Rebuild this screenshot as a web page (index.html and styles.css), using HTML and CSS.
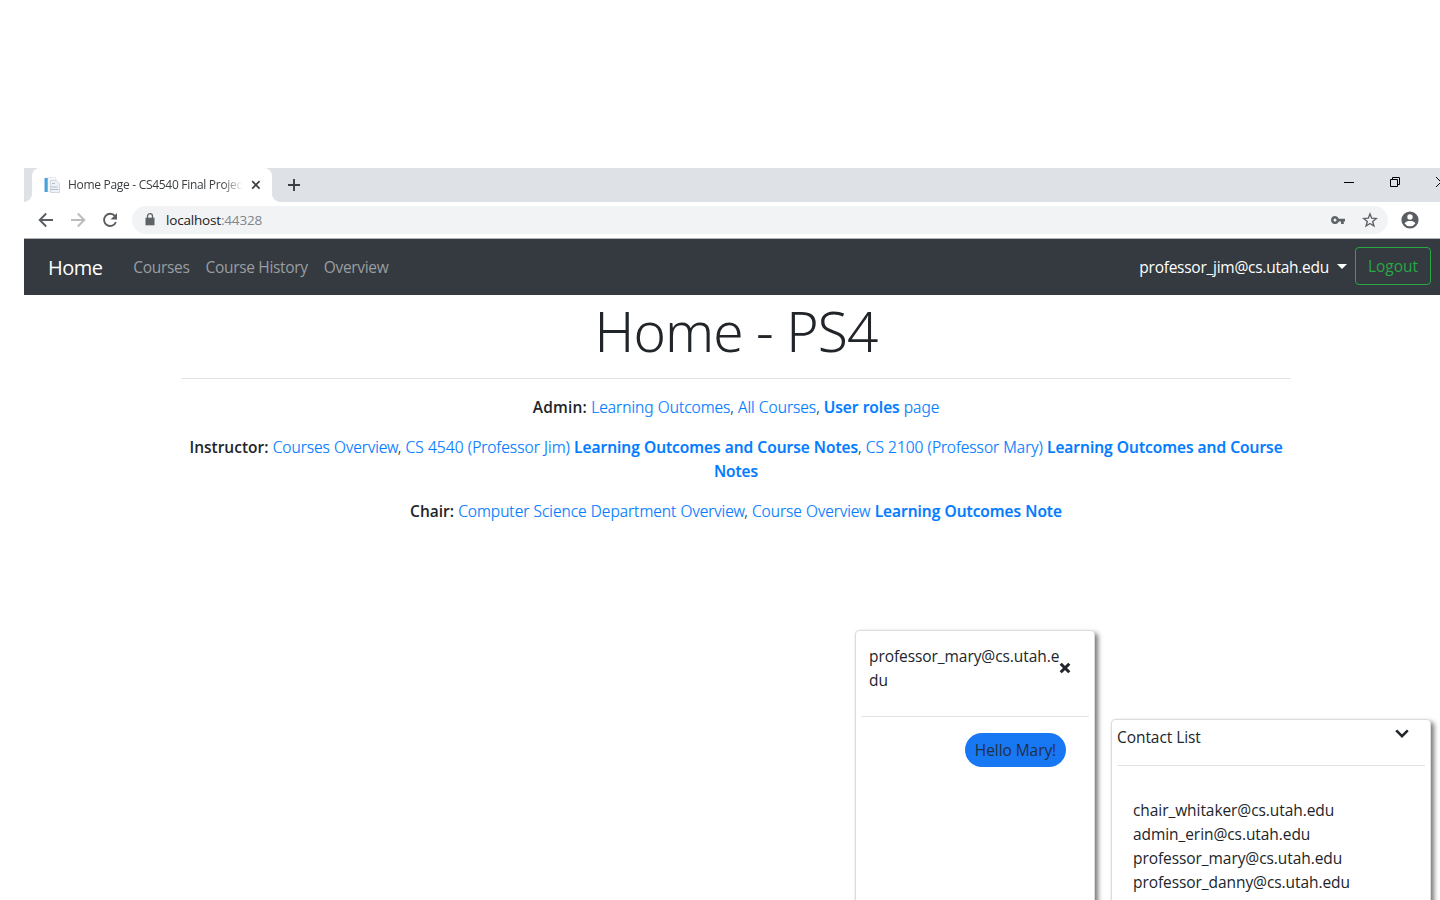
FILE: index.html
```
<!DOCTYPE html>
<html lang="en">
<head>
<meta charset="utf-8">
<title>Home Page - CS4540 Final Project</title>
<link rel="stylesheet" href="styles.css">
</head>
<body>
<div class="window">
  <div class="tabstrip">
    <div class="tab-edge"></div>
    <div class="tab">
      <svg class="favicon" width="16" height="16" viewBox="0 0 16 16"><path d="M3 .5h9v14H3z" fill="#f4f7fa" stroke="#dde3ea" stroke-width=".6"/><path d="M.5 1h3.200v14H.5z" fill="#4da0d8"/><path d="M6.500 3.500h6l3 3v9h-9z" fill="#eff2f5" stroke="#c9d0d9" stroke-width=".8"/><path d="M8 6.500h3M6.500 10h7M6.500 12.500h8" stroke="#b3becb" stroke-width="1"/></svg>
      <span class="tab-title">Home Page - CS4540 Final Projec</span>
      <svg class="tab-close" width="10" height="10" viewBox="0 0 10 10"><path d="M1.2 1.2l7.4 7.4M8.600 1.200L1.200 8.600" stroke="#3c4043" stroke-width="1.700"/></svg>
    </div>
    <div class="tab-rest">
      <svg class="new-tab" width="12" height="12" viewBox="0 0 12 12"><path d="M6 0v12M0 6h12" stroke="#3c4043" stroke-width="1.900"/></svg>
      <div class="controls">
        <svg width="10" height="10" viewBox="0 0 10 10"><path d="M0 5.500h10" stroke="#000"/></svg>
        <svg width="10" height="10" viewBox="0 0 10 10"><path d="M.5 2.500h7v7h-7zM2.500 2.500v-2h7v7h-2" fill="none" stroke="#000"/></svg>
        <svg width="10" height="10" viewBox="0 0 10 10"><path d="M0 0l10 10M10 0L0 10" stroke="#000"/></svg>
      </div>
    </div>
  </div>
  <div class="toolbar">
    <svg class="tool" width="16" height="16" viewBox="0 0 16 16"><path d="M15 8H2M8.200 1.500L1.700 8l6.500 6.500" fill="none" stroke="#5a5e63" stroke-width="1.900"/></svg>
    <svg class="tool" width="16" height="16" viewBox="0 0 16 16"><path d="M1 8h13M7.800 1.500L14.300 8l-6.500 6.500" fill="none" stroke="#babcbe" stroke-width="1.900"/></svg>
    <svg class="tool" width="16" height="16" viewBox="0 0 16 16"><path d="M13 4.200A6.100 6.100 0 1 0 13.900 10" fill="none" stroke="#5a5e63" stroke-width="1.900"/><path d="M15 1v6.500H8.500z" fill="#5a5e63"/></svg>
    <div class="omnibox">
      <svg class="lock" width="10" height="13" viewBox="0 0 10 13"><path d="M.5 4.700h9v7.600h-9z" fill="#5f6368"/><path d="M2.500 5V3.200a2.500 2.500 0 0 1 5 0V5" fill="none" stroke="#5f6368" stroke-width="1.300"/></svg>
      <span class="url">localhost<span class="port">:44328</span></span>
      <svg class="key" width="14" height="8" viewBox="0 0 14 8"><path fill="#5f6368" fill-rule="evenodd" d="M4 0a4 4 0 0 1 3.800 2.700H14v2.800h-1.200V8H10V5.400H7.800A4 4 0 1 1 4 0zM4 2.500a1.500 1.500 0 1 0 0 3 1.500 1.500 0 0 0 0-3z"/></svg>
      <svg class="star" width="16" height="16" viewBox="0 0 16 16"><path d="M8 1.900l1.700 4.300 4.600.3-3.600 3 1.200 4.500L8 11.500 4.100 14l1.200-4.500-3.600-3 4.600-.3z" fill="none" stroke="#5f6368" stroke-width="1.400"/></svg>
    </div>
    <svg class="avatar" width="18" height="18" viewBox="0 0 18 18"><circle cx="9" cy="9" r="8.600" fill="#5a5e63"/><circle cx="9" cy="6" r="2.700" fill="#fff"/><path d="M3.600 12.400c1-2 3-2.500 5.400-2.500s4.400.5 5.400 2.500A6.500 6.500 0 0 1 9 15.200a6.500 6.500 0 0 1-5.400-2.800z" fill="#fff"/></svg>
  </div>
  <nav class="navbar">
    <a class="brand">Home</a>
    <a class="nav-link">Courses</a>
    <a class="nav-link">Course History</a>
    <a class="nav-link">Overview</a>
    <a class="user">professor_jim@cs.utah.edu</a>
    <span class="caret"></span>
    <a class="logout">Logout</a>
  </nav>
  <main class="container">
    <h1>Home - PS4</h1>
    <hr>
    <p><b class="admin">Admin:</b> <a>Learning Outcomes</a>, <a>All Courses</a>, <a><b>User roles</b> page</a></p>
    <p><b>Instructor:</b> <a>Courses Overview</a>, <a><span class="cs">CS 4540 (Professor Jim)</span> <b>Learning Outcomes and Course Notes</b></a>, <a>CS 2100 (Professor Mary) <b>Learning Outcomes and Course<br>Notes</b></a></p>
    <p><b>Chair:</b> <a>Computer Science Department Overview</a>, <a>Course Overview <b>Learning Outcomes Note</b></a></p>
  </main>
</div>
<section class="panel chat">
  <header class="chat-head">
    <span class="chat-name">professor_mary@cs.utah.edu</span>
    <svg class="chat-close" width="12" height="12" viewBox="0 0 12 12"><path d="M1.700 1.700l8.600 8.600M10.300 1.700l-8.600 8.600" stroke="#212529" stroke-width="3"/></svg>
  </header>
  <hr>
  <div class="bubble">Hello Mary!</div>
</section>
<section class="panel contacts">
  <header class="contacts-head">
    <span>Contact List</span>
    <svg width="14" height="9" viewBox="0 0 14 9"><path d="M1.200 1.400L7 7.200l5.800-5.800" fill="none" stroke="#212529" stroke-width="2.500"/></svg>
  </header>
  <hr>
  <ul>
    <li>chair_whitaker@cs.utah.edu</li>
    <li>admin_erin@cs.utah.edu</li>
    <li>professor_mary@cs.utah.edu</li>
    <li>professor_danny@cs.utah.edu</li>
  </ul>
</section>
</body>
</html>
```
FILE: styles.css
```
* { box-sizing: border-box; }
html, body { height: 100%; overflow: hidden; }
body {
  margin: 0;
  position: relative;
  background: #fff;
  color: #212529;
  font: 400 15.5px/24px "Open Sans", "Noto Sans", sans-serif;
}
svg { display: block; flex: none; }
hr { margin: 0; border: 0; border-top: 1px solid #e3e3e4; }

.window { width: 1424px; margin-left: 24px; padding-top: 168px; }

.tabstrip { display: flex; height: 34px; background: #dee1e6; }
.tab-edge {
  width: 8px;
  background: radial-gradient(circle at 0 0, #dee1e6 7.5px, #fff 8.2px) bottom / 8px 8px no-repeat;
}
.tab {
  width: 240px;
  display: flex;
  align-items: center;
  padding: 0 11px 0 12px;
  background: #fff;
  border-radius: 8px 8px 0 0;
}
.tab-title {
  width: 175px;
  margin: 0 8px;
  white-space: nowrap;
  font-size: 12px;
  letter-spacing: -.3px;
  color: #3c4043;
  -webkit-mask-image: linear-gradient(90deg, #000 88%, transparent);
  mask-image: linear-gradient(90deg, #000 88%, transparent);
}
.tab-rest {
  flex: 1;
  display: flex;
  align-items: center;
  justify-content: space-between;
  padding: 0 2px 0 16px;
  background: radial-gradient(circle at 100% 0, #dee1e6 7.5px, #fff 8.2px) left bottom / 8px 8px no-repeat;
}
.controls { display: flex; gap: 36px; margin-top: -6px; }

.toolbar {
  display: flex;
  align-items: center;
  height: 37px;
  padding: 0 0 1px 14px;
  border-bottom: 1px solid #b3b4b8;
}
.tool { margin-right: 16px; }
.omnibox {
  display: flex;
  align-items: center;
  width: 1256px;
  height: 28px;
  margin-right: 13px;
  margin-left: -2px;
  padding: 0 10px 0 13px;
  background: #f1f3f4;
  border-radius: 14px;
}
.url { margin-left: 11px; font-size: 13.5px; letter-spacing: -.18px; color: #202124; }
.port { color: #80868b; }
.key { margin-left: auto; margin-right: 17px; }

.navbar {
  display: flex;
  align-items: center;
  height: 56px;
  padding: 0 17px 0 24px;
  background: #343a40;
  color: #fff;
}
.brand { margin: 1px 31px 0 0; font-size: 20px; letter-spacing: -.55px; }
.nav-link { margin-right: 16px; letter-spacing: -.32px; color: #9a9da0; }
.user { margin-left: auto; letter-spacing: -.26px; }
.caret { margin: -2px 8px 0 8px; border: 5px solid transparent; border-top-color: #fff; border-bottom: 0; }
.logout {
  width: 76px;
  height: 38px;
  margin-top: -2px;
  border: 1px solid #28a745;
  border-radius: 4px;
  line-height: 37px;
  text-align: center;
  color: #28a745;
}

.container {
  width: 1110px;
  margin: 0 auto;
  text-align: center;
  font-family: "Noto Sans", "Open Sans", sans-serif;
  font-weight: 300;
}
.container h1 {
  height: 67px;
  margin: 0 0 16px;
  padding-top: 2px;
  font-size: 55px;
  line-height: 67px;
  font-weight: 300;
  letter-spacing: -.9px;
}
.container p { margin: 16px 0 0; white-space: nowrap; word-spacing: .15px; }
.container a { color: #007bff; -webkit-text-stroke: .2px #007bff; }
.container b { font-family: "Open Sans", sans-serif; font-weight: 600; }
.container .admin { letter-spacing: .2px; }
.cs { letter-spacing: .05px; }

.panel {
  position: absolute;
  background: #fff;
  border: 1px solid #dcdcdc;
  border-radius: 4px;
  box-shadow: 3px 3px 5px #777;
  padding: 0 5px;
  letter-spacing: -.07px;
}
.chat { left: 855px; top: 630px; width: 240px; height: 300px; }
.chat-head { display: flex; height: 85px; padding: 13px 0 0 8px; }
.chat-name { width: 192px; word-break: break-all; }
.chat-close { margin: 18px 0 0 -2px; }
.bubble {
  width: 101px;
  height: 34px;
  margin: 16px 23px 0 auto;
  border-radius: 17px;
  background: #1877f2;
  text-align: center;
  line-height: 34px;
  color: #212f45;
}
.contacts { left: 1111px; top: 719px; width: 320px; height: 220px; }
.contacts-head { display: flex; justify-content: space-between; height: 45px; padding: 5px 16px 0 0; }
.contacts-head svg { margin-top: 4px; }
.contacts ul { margin: 32px 0 0; padding: 0 0 0 16px; list-style: none; }
```
